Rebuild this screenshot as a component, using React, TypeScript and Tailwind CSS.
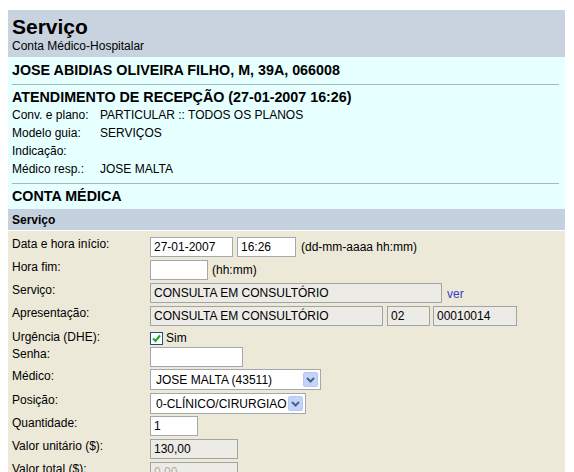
import type { ReactNode } from "react";

const font = { fontFamily: '"Liberation Sans", Arial, sans-serif' };

const Box = ({
  w,
  children,
  readOnly = false,
  disabled = false,
}: {
  w: string;
  children?: ReactNode;
  readOnly?: boolean;
  disabled?: boolean;
}) => (
  <div
    className={`${w} h-[20px] shrink-0 overflow-hidden whitespace-nowrap border px-[3px] text-[12px] leading-[18px] ${
      readOnly
        ? "border-[#a3a3a3] bg-[#ecebe6]"
        : "border-[#a7a6aa] bg-white"
    } ${disabled ? "text-[#b0aea6]" : "text-black"}`}
  >
    {children}
  </div>
);

const Select = ({ w, value }: { w: string; value: string }) => (
  <div
    className={`${w} flex h-[21px] shrink-0 items-center justify-between border border-[#a7a6aa] bg-white pl-[5px] pr-[2px] text-[12px]`}
  >
    <span className="whitespace-nowrap">{value}</span>
    <span className="flex h-[15px] w-[15px] items-center justify-center rounded-[2px] border border-[#b6c9f3] bg-[#c3d4fb]">
      <svg width="9" height="6" viewBox="0 0 9 6">
        <path d="M1 1 L4.5 4.5 L8 1" fill="none" stroke="#4d6185" strokeWidth="2" />
      </svg>
    </span>
  </div>
);

const Row = ({
  label,
  children,
  h = "h-[23px]",
}: {
  label: string;
  children?: ReactNode;
  h?: string;
}) => (
  <div className={`flex ${h} items-start`}>
    <div className="w-[138px] shrink-0 pt-[1px] text-[12px] leading-[14px]">{label}</div>
    <div className="flex items-start pt-[1px]">{children}</div>
  </div>
);

const Info = ({ label, value }: { label: string; value?: string }) => (
  <div className="flex h-[18px] items-center text-[12px]">
    <span className="w-[88px] shrink-0">{label}</span>
    <span>{value}</span>
  </div>
);

export default function App() {
  return (
    <div className="min-h-[472px] bg-white pl-[8px] pt-[10px] text-black" style={font}>
      <div className="w-[557px]">
        {/* cabeçalho */}
        <div className="bg-[#c9d3df] pb-[4px] pl-[4px] pt-[5px]">
          <div className="text-[21px] font-bold leading-[24px]">Serviço</div>
          <div className="text-[12px] leading-[14px]">Conta Médico-Hospitalar</div>
        </div>

        {/* paciente / atendimento */}
        <div className="bg-[#e6ffff] pl-[4px] pt-[4px]">
          <div className="text-[14.3px] font-bold leading-[18px]">
            JOSE ABIDIAS OLIVEIRA FILHO, M, 39A, 066008
          </div>
          <div className="mr-[6px] mt-[5px] h-px bg-[#a9b6bb]" />
          <div className="pt-[3px] text-[14.3px] font-bold leading-[18px]">
            ATENDIMENTO DE RECEPÇÃO (27-01-2007 16:26)
          </div>
          <Info label="Conv. e plano:" value="PARTICULAR :: TODOS OS PLANOS" />
          <Info label="Modelo guia:" value="SERVIÇOS" />
          <Info label="Indicação:" />
          <Info label="Médico resp.:" value="JOSE MALTA" />
          <div className="mr-[6px] mt-[5px] h-px bg-[#a9b6bb]" />
          <div className="pb-[4px] pt-[3px] text-[14.3px] font-bold leading-[18px]">
            CONTA MÉDICA
          </div>
        </div>

        <div className="flex h-[22px] items-center border-b border-white bg-[#c6d1df] pl-[4px] text-[12px] font-bold">
          Serviço
        </div>

        {/* formulário */}
        <div className="min-h-[260px] bg-[#ece9d8] pl-[4px] pt-[5px]">
          <Row label="Data e hora início:">
            <Box w="w-[83px]">27-01-2007</Box>
            <Box w="w-[59px] ml-[4px]">16:26</Box>
            <span className="ml-[5px] text-[12px] leading-[20px]">(dd-mm-aaaa hh:mm)</span>
          </Row>
          <Row label="Hora fim:">
            <Box w="w-[58px]" />
            <span className="ml-[4px] text-[12px] leading-[20px]">(hh:mm)</span>
          </Row>
          <Row label="Serviço:">
            <Box w="w-[292px]" readOnly>
              CONSULTA EM CONSULTÓRIO
            </Box>
            <span className="ml-[5px] text-[12px] leading-[22px] text-[#3b3bc8]">ver</span>
          </Row>
          <Row label="Apresentação:" h="h-[24px]">
            <Box w="w-[233px]" readOnly>
              CONSULTA EM CONSULTÓRIO
            </Box>
            <Box w="w-[43px] ml-[4px]" readOnly>
              02
            </Box>
            <Box w="w-[84px] ml-[3px]" readOnly>
              00010014
            </Box>
          </Row>
          <Row label="Urgência (DHE):" h="h-[17px]">
            <div className="mt-[1px] flex items-center">
              <span className="flex h-[13px] w-[13px] items-center justify-center border border-[#1c5180] bg-white">
                <svg width="9" height="9" viewBox="0 0 9 9">
                  <path d="M1 4.5 L3.5 7 L8 1.5" fill="none" stroke="#21a121" strokeWidth="2" />
                </svg>
              </span>
              <span className="ml-[3px] text-[12px] leading-[14px]">Sim</span>
            </div>
          </Row>
          <Row label="Senha:" h="h-[22px]">
            <Box w="w-[93px]" />
          </Row>
          <Row label="Médico:" h="h-[24px]">
            <Select w="w-[171px]" value="JOSE MALTA (43511)" />
          </Row>
          <Row label="Posição:">
            <Select w="w-[156px]" value="0-CLÍNICO/CIRURGIAO" />
          </Row>
          <Row label="Quantidade:">
            <Box w="w-[48px]">1</Box>
          </Row>
          <Row label="Valor unitário ($):">
            <Box w="w-[88px]" readOnly>
              130,00
            </Box>
          </Row>
          <Row label="Valor total ($):">
            <Box w="w-[88px]" readOnly disabled>
              0,00
            </Box>
          </Row>
        </div>
      </div>
    </div>
  );
}
